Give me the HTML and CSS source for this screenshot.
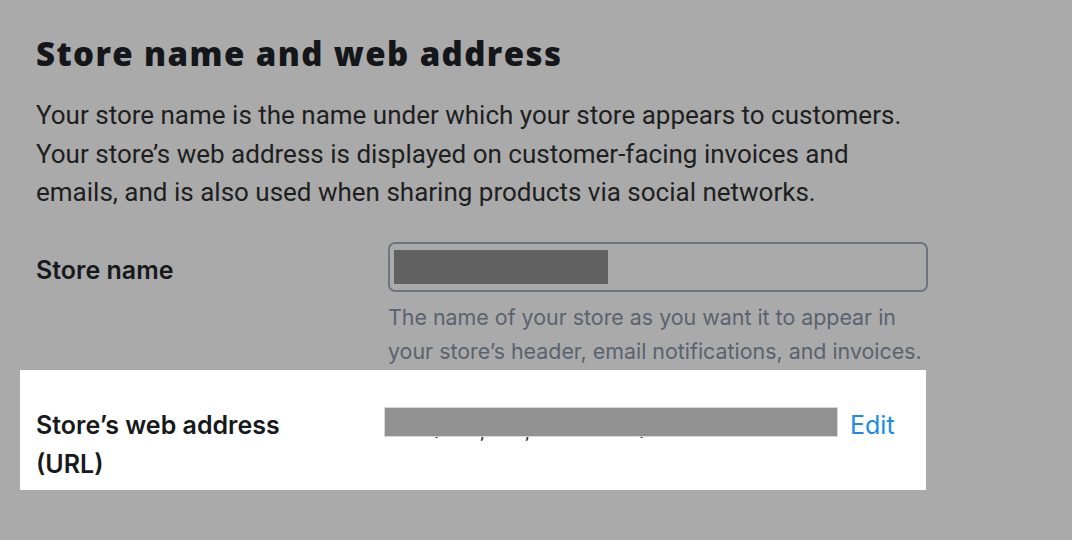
FILE: index.html
```html
<!DOCTYPE html>
<html lang="en">
<head>
<meta charset="utf-8">
<title>Store name and web address</title>
<link rel="stylesheet" href="styles.css">
</head>
<body>
<main class="page">
  <h1 class="title">Store name and web address</h1>
  <p class="intro">Your store name is the name under which your store appears to customers. Your store’s web address is displayed on customer-facing invoices and emails, and is also used when sharing products via social networks.</p>

  <div class="row">
    <div class="label">Store name</div>
    <div class="field">
      <div class="input"><span class="redact-dark"></span></div>
      <p class="help">The name of your store as you want it to appear in your store’s header, email notifications, and invoices.</p>
    </div>
  </div>

  <div class="row row-highlight">
    <div class="label">Store’s web address<br>(URL)</div>
    <div class="url-field">
      <div class="url-value"><span class="redact-light"></span><span class="url-ghost">. , ,    .</span></div>
      <a class="edit" href="#">Edit</a>
    </div>
  </div>
</main>
</body>
</html>
```

FILE: styles.css
```css
html, body {
  margin: 0;
  padding: 0;
  background: #aaaaaa;
}

.page {
  padding: 30px 0 0 36px;
  width: 892px;
  font-family: "Roboto", "Liberation Sans", sans-serif;
  color: #1b1c1e;
}

.title {
  margin: 0;
  font-family: "Open Sans", "Inter", sans-serif;
  font-weight: 800;
  font-size: 33px;
  line-height: 48px;
  color: #141619;
  letter-spacing: 1.4px;
}

.intro {
  margin: 18px 0 0;
  font-size: 26px;
  line-height: 38.5px;
  color: #1e1f21;
  width: 880px;
}

.row {
  display: grid;
  grid-template-columns: 352px 540px;
  margin-top: 30px;
}

.label {
  font-family: "Inter", sans-serif;
  font-weight: 600;
  font-size: 25px;
  line-height: 39px;
  color: #17191c;
  padding-top: 9px;
}

.input {
  box-sizing: border-box;
  height: 50px;
  border: 2px solid #6f7580;
  border-radius: 7px;
  padding: 6px 4px;
  display: flex;
  align-items: stretch;
}

.redact-dark {
  display: block;
  width: 214px;
  background: #616161;
}

.help {
  margin: 8px 0 0;
  font-family: "Inter", sans-serif;
  font-size: 21.4px;
  line-height: 34px;
  color: #5a6270;
}

.row-highlight {
  margin: 2px 0 0 -16px;
  width: 906px;
  padding: 36px 0 6px 16px;
  box-sizing: border-box;
  background: #ffffff;
  grid-template-columns: 348px 1fr;
}

.row-highlight .label {
  padding-top: 0;
}

.url-field {
  display: flex;
  align-items: flex-start;
  gap: 12px;
  padding-top: 1px;
}

.url-value {
  position: relative;
  width: 454px;
  height: 30px;
}

.redact-light {
  position: absolute;
  inset: 0;
  background: #919191;
  border: 1px solid #d8d8d8;
  z-index: 1;
}

.url-ghost {
  position: absolute;
  left: 50px;
  top: 12px;
  font-size: 20px;
  color: #333;
  letter-spacing: 18px;
  white-space: pre;
}

.edit {
  font-family: "Inter", sans-serif;
  font-size: 25px;
  line-height: 32px;
  padding-top: 2px;
  color: #1b8ae8;
  text-decoration: none;
}
```
